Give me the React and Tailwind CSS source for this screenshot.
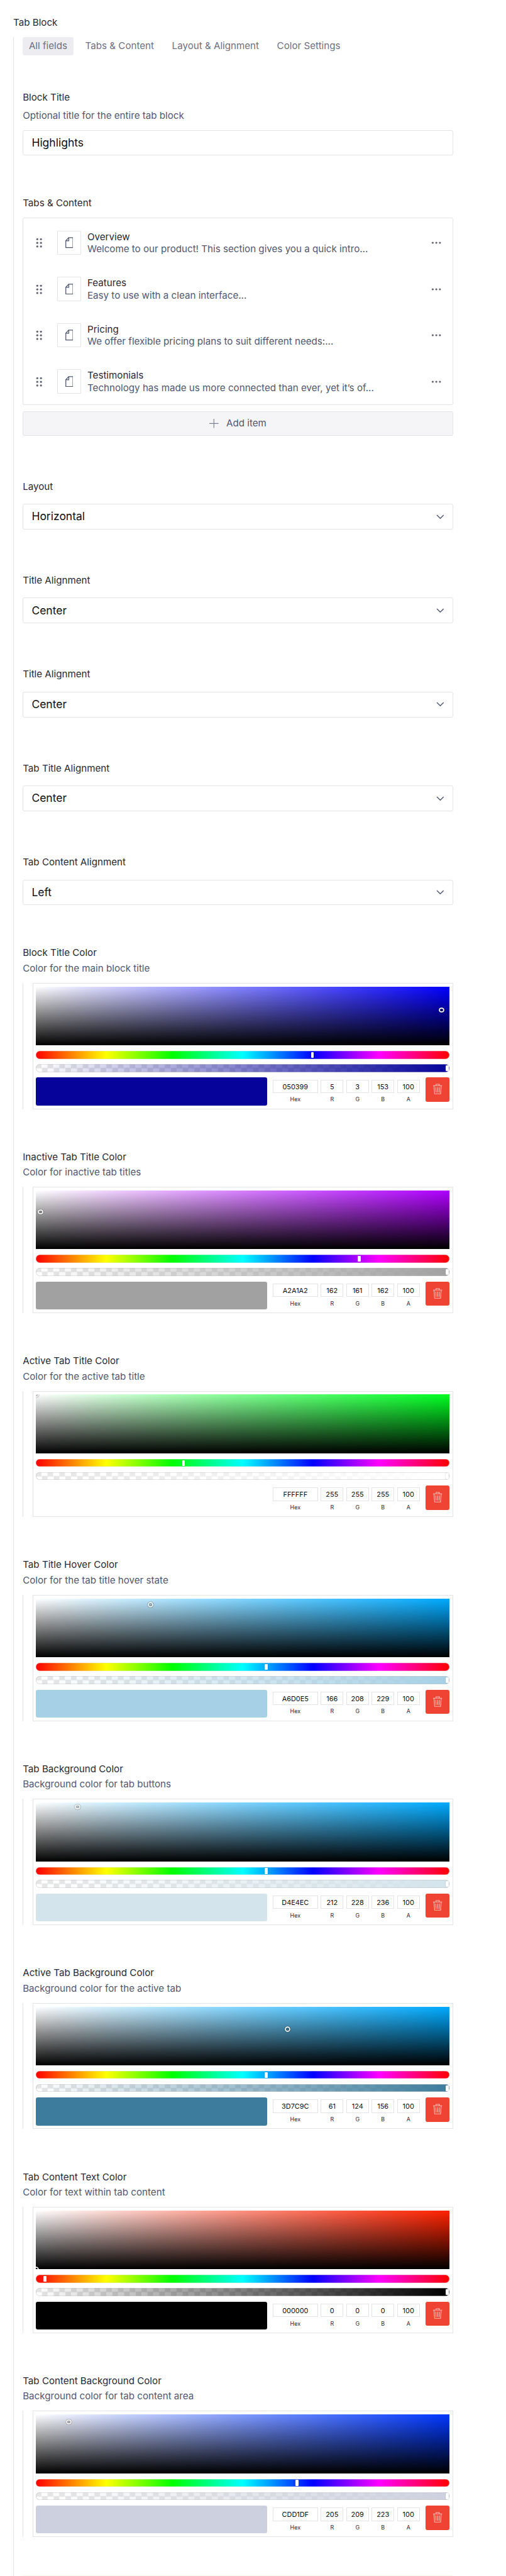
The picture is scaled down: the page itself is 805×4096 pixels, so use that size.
const TABS = ['All fields', 'Tabs & Content', 'Layout & Alignment', 'Color Settings'];

const ITEMS = [
  { title: 'Overview', text: 'Welcome to our product! This section gives you a quick intro...' },
  { title: 'Features', text: 'Easy to use with a clean interface...' },
  { title: 'Pricing', text: 'We offer flexible pricing plans to suit different needs:...' },
  { title: 'Testimonials', text: 'Technology has made us more connected than ever, yet it’s of...' },
];

const SELECTS = [
  { label: 'Layout', value: 'Horizontal' },
  { label: 'Title Alignment', value: 'Center' },
  { label: 'Title Alignment', value: 'Center' },
  { label: 'Tab Title Alignment', value: 'Center' },
  { label: 'Tab Content Alignment', value: 'Left' },
];

// x / y / huePos are percentages of the saturation area and the hue bar.
const COLORS = [
  { title: 'Block Title Color', text: 'Color for the main block title', hue: '#0300ff', hex: '050399', rgb: [5, 3, 153], x: 98.05, y: 40, huePos: 66.8 },
  { title: 'Inactive Tab Title Color', text: 'Color for inactive tab titles', hue: '#b000ff', hex: 'A2A1A2', rgb: [162, 161, 162], x: 1.06, y: 36.5, huePos: 78.15 },
  { title: 'Active Tab Title Color', text: 'Color for the active tab title', hue: '#00ff22', hex: 'FFFFFF', rgb: [255, 255, 255], x: 0, y: 0, huePos: 35.65 },
  { title: 'Tab Title Hover Color', text: 'Color for the tab title hover state', hue: '#00aaff', hex: 'A6D0E5', rgb: [166, 208, 229], x: 27.7, y: 10.2, huePos: 55.6 },
  { title: 'Tab Background Color', text: 'Background color for tab buttons', hue: '#00aaff', hex: 'D4E4EC', rgb: [212, 228, 236], x: 10.1, y: 7.5, huePos: 55.6 },
  { title: 'Active Tab Background Color', text: 'Background color for the active tab', hue: '#00aaff', hex: '3D7C9C', rgb: [61, 124, 156], x: 60.85, y: 38.8, huePos: 55.6 },
  { title: 'Tab Content Text Color', text: 'Color for text within tab content', hue: '#ff2200', hex: '000000', rgb: [0, 0, 0], x: 0, y: 100, huePos: 2.2 },
  { title: 'Tab Content Background Color', text: 'Background color for tab content area', hue: '#0037ff', hex: 'CDD1DF', rgb: [205, 209, 223], x: 7.97, y: 12.5, huePos: 63.05 },
];

function Label({ children }) {
  return <div className="h-[20px] leading-[21px] text-[#272a35]">{children}</div>;
}

function DragDots() {
  return (
    <svg className="w-[10.5px] h-[16.3px]" viewBox="0 0 18 28" fill="#62656f">
      {[4, 14, 24].map((y) => (
        <g key={y}>
          <circle cx="4" cy={y} r="2.8" />
          <circle cx="14" cy={y} r="2.8" />
        </g>
      ))}
    </svg>
  );
}

function DocumentIcon() {
  return (
    <svg className="shrink-0 w-[12.8px] h-[17.5px]" viewBox="0 0 22 30" fill="none" stroke="#515870" strokeWidth="2.2">
      <path d="M9 1.3H20.8V28.7H1.2V10Z" />
      <path d="M9.3 1.5V10H1" />
    </svg>
  );
}

function TrashIcon() {
  return (
    <svg className="w-full h-full" viewBox="0 0 66 66" fill="none" stroke="#fbb9b2" strokeWidth="2">
      <path d="M20.5 22.7H45.2M28.4 22.5V18.8H37.6V22.5M23 22.7L24.8 45H41L42.7 22.7M28 27L28.6 41M32.9 27V41M37.8 27L37.2 41" />
    </svg>
  );
}

function SelectField({ label, value }) {
  return (
    <div>
      <Label>{label}</Label>
      <div className="mt-[18.5px] h-[40.8px] border border-[#e3e4e8] rounded-[3px] pl-[13.2px] pr-[13.5px] flex items-center justify-between text-[17.5px] text-[#0d0e12]">
        <span>{value}</span>
        <svg className="w-[12.8px] h-[7.6px]" viewBox="0 0 22 13" fill="none" stroke="#515870" strokeWidth="2.4">
          <path d="M1.8 1.6L11 10.8L20.2 1.6" />
        </svg>
      </div>
    </div>
  );
}

function Channel({ label, value, width }) {
  return (
    <div className={`${width} shrink-0 flex flex-col items-center`}>
      <div className="w-full h-[21.4px] pt-[0.8px] border border-[#e3e4e8] flex items-center justify-center text-[10.9px] text-[#0d0e12]">{value}</div>
      <div className="mt-[3.3px] h-[12px] leading-[13px] text-[8.9px] text-[#272a35]">{label}</div>
    </div>
  );
}

function Handle({ left }) {
  return (
    <div
      className="absolute top-[1.8px] w-[4.7px] h-[9.2px] -ml-[2.35px] rounded-[1px] bg-white shadow-[0_0_1px_rgba(0,0,0,0.6)]"
      style={{ left }}
    />
  );
}

function ColorField({ title, text, hue, hex, rgb, x, y, huePos }) {
  const [r, g, b] = rgb;
  return (
    <div>
      <Label>{title}</Label>
      <div className="mt-[4.5px] h-[20px] leading-[21px] text-[#515870]">{text}</div>
      <div className="mt-[14.1px] h-[200.7px] border-l border-[#e3e4e8] pl-[14.5px]">
        <div className="h-full border border-[#e3e4e8] px-[4.6px] pt-[4.8px] flex flex-col">
          <div
            className="relative h-[93.4px] shrink-0 overflow-hidden"
            style={{
              backgroundImage: `linear-gradient(to top, #000, rgba(0,0,0,0)), linear-gradient(to right, #fff, rgba(255,255,255,0))`,
              backgroundColor: hue,
            }}
          >
            <div
              className="absolute w-[4.67px] h-[4.67px] -ml-[2.33px] -mt-[2.33px] rounded-full shadow-[0_0_0_1.75px_#fff,inset_0_0_1.17px_1.17px_rgba(0,0,0,0.3),0_0_1.17px_2.33px_rgba(0,0,0,0.4)]"
              style={{ left: `${x}%`, top: `${y}%` }}
            />
          </div>
          <div className="relative mt-[9px] h-[12.5px] shrink-0 rounded-full bg-[linear-gradient(to_right,#f00_0%,#ff0_17%,#0f0_33%,#0ff_50%,#00f_67%,#f0f_83%,#f00_100%)] shadow-[inset_0_0_0_0.5px_rgba(227,228,232,0.6)]">
            <Handle left={`${huePos}%`} />
          </div>
          <div className="relative mt-[8.4px] h-[12.6px] shrink-0 rounded-full bg-[conic-gradient(#fff_25%,#e6e6e6_0_50%,#fff_0_75%,#e6e6e6_0)] bg-[length:18.67px_18.67px] bg-left">
            <div
              className="absolute inset-0 rounded-full shadow-[inset_0_0_0_0.6px_rgba(190,192,200,0.9)]"
              style={{ backgroundImage: `linear-gradient(to right, rgba(${r},${g},${b},0), rgb(${r},${g},${b}))` }}
            />
            <Handle left="99.45%" />
          </div>
          <div className="mt-[8.9px] flex items-start">
            <div className="flex-1 h-[44.3px] rounded-[3px]" style={{ backgroundColor: `#${hex}` }} />
            <div className="ml-[9.3px] mt-[3.2px] flex gap-[4.7px]">
              <Channel label="Hex" value={hex} width="w-[71.7px]" />
              <Channel label="R" value={r} width="w-[35.8px]" />
              <Channel label="G" value={g} width="w-[35.8px]" />
              <Channel label="B" value={b} width="w-[35.8px]" />
              <Channel label="A" value={100} width="w-[35.8px]" />
            </div>
            <div className="ml-[9.3px] w-[38.5px] h-[38.5px] rounded-[3px] bg-[#ef4434]">
              <TrashIcon />
            </div>
          </div>
        </div>
      </div>
    </div>
  );
}

export default function App() {
  return (
    <div className="w-[805px] h-[4096px] overflow-hidden bg-white pl-[21px] pt-[24.7px] flex flex-col text-[15.17px] font-[Inter,sans-serif]">
      <div className="shrink-0">
        <Label>Tab Block</Label>
      </div>
      <div className="mt-[13.9px] flex-1 border-l border-[#e3e4e8] pl-[14.2px]">
        <div className="w-[684.8px]">
          <div className="flex gap-[9.2px] h-[29.4px]">
            {TABS.map((tab, i) => (
              <div
                key={tab}
                className={`px-[9.7px] h-full flex items-center rounded-[3px] text-[#6e7080] ${i === 0 ? 'bg-[#ededf1]' : ''}`}
              >
                {tab}
              </div>
            ))}
          </div>

          <div className="mt-[55.8px]">
            <Label>Block Title</Label>
            <div className="mt-[9.2px] h-[20px] leading-[21px] text-[#515870]">Optional title for the entire tab block</div>
            <div className="mt-[14.1px] h-[39.7px] border border-[#e3e4e8] rounded-[3px] pl-[13.2px] flex items-center text-[17.5px] text-[#0d0e12]">
              Highlights
            </div>
          </div>

          <div className="mt-[65px]">
            <Label>Tabs & Content</Label>
            <div className="mt-[14.2px] h-[298.5px] border border-[#e3e4e8] rounded-[3px] pt-[2.5px]">
              {ITEMS.map((item) => (
                <div key={item.title} className="h-[73.5px] flex items-center pl-[19.6px] pr-[17.5px]">
                  <DragDots />
                  <div className="ml-[23.5px] w-[38.5px] h-[38.5px] border border-[#e3e4e8] rounded-[1px] flex items-center justify-center">
                    <DocumentIcon />
                  </div>
                  <div className="ml-[9.7px] flex-1 leading-[19.8px] pt-[0.6px]">
                    <div className="text-[#272a35]">{item.title}</div>
                    <div className="text-[#515870]">{item.text}</div>
                  </div>
                  <svg className="w-[16.3px] h-[4px]" viewBox="0 0 28 7" fill="#62656f">
                    <circle cx="4" cy="3.5" r="2.8" />
                    <circle cx="14" cy="3.5" r="2.8" />
                    <circle cx="24" cy="3.5" r="2.8" />
                  </svg>
                </div>
              ))}
            </div>
            <div className="mt-[9.9px] h-[38.4px] border border-[#e3e4e8] rounded-[3px] bg-[#f5f5f8] flex items-center justify-center gap-[12px] text-[#515870]">
              <svg className="w-[14.6px] h-[14.6px]" viewBox="0 0 25 25" stroke="#7d8090" strokeWidth="2">
                <path d="M12.5 0V25M0 12.5H25" />
              </svg>
              Add item
            </div>
          </div>

          <div className="mt-[69.8px] flex flex-col gap-[70.1px]">
            {SELECTS.map((field, i) => (
              <SelectField key={i} {...field} />
            ))}
          </div>

          <div className="mt-[64.9px] flex flex-col gap-[65.1px]">
            {COLORS.map((field) => (
              <ColorField key={field.title} {...field} />
            ))}
          </div>

          <div className="mt-[60.4px] h-[3px] rounded-t-[3px] bg-[#faf9ee]" />
        </div>
      </div>
    </div>
  );
}
